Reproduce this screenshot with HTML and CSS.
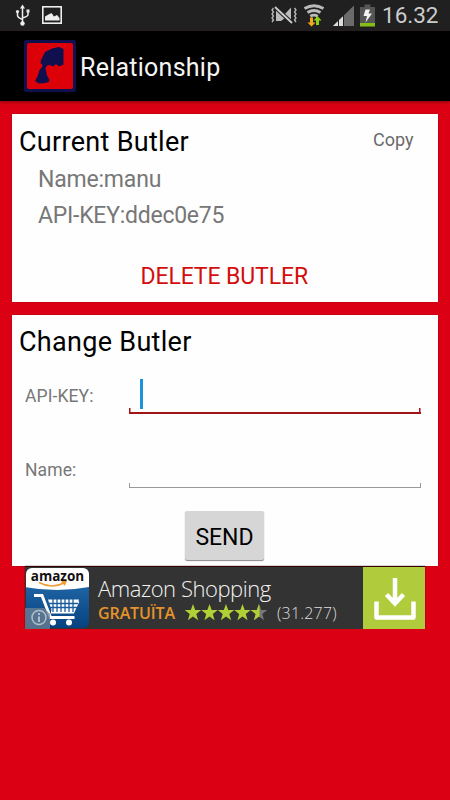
FILE: index.html
```html
<!DOCTYPE html>
<html lang="en">
<head>
    <meta charset="UTF-8">
    <meta name="viewport" content="width=device-width, initial-scale=1.0">
    <title>Relationship</title>
    <link rel="stylesheet" href="styles.css">
</head>
<body>

<div class="status-bar">
    <svg class="status-left" width="70" height="31" viewBox="0 0 70 31">
        <!-- usb -->
        <g fill="none" stroke="#eee" stroke-width="1.5">
            <path d="M22.5 7v16M17.5 12v3.5q0 2 5 4M28 12v2.500q0 2-5.500 3.500"/>
        </g>
        <path d="M22.500 4.500l2.500 4h-5z" fill="#eee"/>
        <circle cx="22.500" cy="23.500" r="2.200" fill="#eee"/>
        <circle cx="17.500" cy="11.500" r="1.600" fill="#eee"/>
        <rect x="26.500" y="9.500" width="3" height="3" fill="#eee"/>
        <!-- picture -->
        <rect x="42.800" y="6.800" width="18.400" height="16.400" fill="none" stroke="#eee" stroke-width="1.600"/>
        <path d="M45 20.500v-4l3.500-2 3-1.500 2.500 3.500 3-1.500 2.500 3v2.500z" fill="#eee"/>
    </svg>
    <svg class="status-right" width="110" height="31" viewBox="270 0 110 31">
        <!-- vibrate, muted -->
        <g fill="none" stroke="#bbb" stroke-width="1.300">
            <path d="M273.500 8l-1.500 2 1.500 2-1.500 2 1.500 2-1.500 2 1.500 2-1.500 2M294.500 8l1.500 2-1.500 2 1.500 2-1.500 2 1.500 2-1.500 2 1.500 2"/>
        </g>
        <path d="M276 11h5l4 3 6-6.500V23l-6-5-4 3h-5z" fill="#bbb"/>
        <path d="M275 7l17 16" stroke="#202020" stroke-width="4"/>
        <path d="M275 7l17 16" stroke="#ccc" stroke-width="1.800"/>
        <!-- wifi -->
        <g fill="none" stroke="#bbb" stroke-width="2.800">
            <path d="M304.500 8.500q9.500-5.500 19 0"/>
            <path d="M307.500 12.500q6.500-4 13 0"/>
            <path d="M310.300 16.300q3.700-2.300 7.400 0"/>
        </g>
        <path d="M310 17.500h3v5h2.500l-4 4-4-4h2.500z" fill="#f5a81c"/>
        <path d="M316 25v-4.500h-2.500l4-4.500 4 4.500h-2.500V25z" fill="#8ed018"/>
        <!-- signal -->
        <path d="M333 26L354 5.500V26z" fill="#6b6b6b"/>
        <path d="M333 26l10.500-10.200V26z" fill="#ddd"/>
        <path d="M338.500 18v8M343.500 14v12" stroke="#202020" stroke-width="1"/>
        <!-- battery -->
        <path d="M360 7h4.500V4.500h6V7h4.500v16h-15z" fill="#555"/>
        <rect x="360" y="23" width="15" height="3.500" fill="#86bd16"/>
        <path d="M365.500 9.500h4.500l-1.500 4h3.500l-6.500 9 1.500-6.500h-3.500z" fill="#f4f4f4"/>
    </svg>
    <span class="clock">16.32</span>
</div>

<div class="action-bar">
    <svg class="app-icon" width="52" height="52" viewBox="0 0 52 52">
        <rect width="52" height="52" rx="2" fill="#10104f"/>
        <rect x="3" y="3" width="46" height="46" rx="2" fill="#dc0008"/>
        <!-- hand ringing a bell -->
        <path d="M16.500 23.500l.5-3.500 4-8 7-3.500 7-1.500 4.500 2v15.500l-4.500 2-3-2.500-3 2.500-3-1.500-3 .5-1.500 3 1.500 7 2.500 4.500-1 2-3.500 1-6 .5-4-2.500 2.500-4.500 2-6.500 3-3.500-.5-2.500z" fill="#10104f"/>
    </svg>
    <span class="title">Relationship</span>
</div>

<main class="content">
    <section class="card current">
        <div class="card-head">
            <h2>Current Butler</h2>
            <span class="copy">Copy</span>
        </div>
        <p class="info name">Name:manu</p>
        <p class="info key">API-KEY:ddec0e75</p>
        <div class="delete">DELETE BUTLER</div>
    </section>

    <section class="card change">
        <h2>Change Butler</h2>
        <div class="field">
            <span class="label">API-KEY:</span>
            <div class="input focused"><i class="caret"></i></div>
        </div>
        <div class="field">
            <span class="label">Name:</span>
            <div class="input"></div>
        </div>
        <div class="send"><span>SEND</span></div>
    </section>

    <div class="ad">
        <svg class="ad-logo" width="64" height="62" viewBox="0 0 64 62">
            <defs>
                <linearGradient id="blue" x1="0" y1="0" x2="0" y2="1">
                    <stop offset="0.200" stop-color="#2369a8"/>
                    <stop offset="1" stop-color="#06417f"/>
                </linearGradient>
                <clipPath id="round"><rect x="1" y="1" width="63" height="60" rx="6"/></clipPath>
            </defs>
            <g clip-path="url(#round)">
                <rect width="64" height="62" fill="url(#blue)"/>
                <path d="M0 0h64v20q-32 6-64 0z" fill="#fff"/>
                <path d="M14 15.500q13 7 26 0M36.500 15l4.500-.5-2 4" fill="none" stroke="#ee9a35" stroke-width="1.500"/>
                <path d="M9 28.500h8l8.500 22h24M53 34l-5 11H26" fill="none" stroke="#fff" stroke-width="3"/>
                <path d="M23 32.500h31l-5 12H27z" fill="#fff"/>
                <path d="M22 36.500h31M24 40.500h28M28 32v13M32 32v13M36 32v13M40 32v13M44 32v13M48 32v13" stroke="#1a5c9b" stroke-width="1.300"/>
                <circle cx="28" cy="55.500" r="3" fill="#fff"/>
                <circle cx="44" cy="55.500" r="3" fill="#fff"/>
            </g>
            <text class="logo-text" x="32.500" y="13.500" text-anchor="middle">amazon</text>
            <path d="M0 41h19l6 6v15H0z" fill="#6f8295" fill-opacity=".75"/>
            <circle cx="14" cy="50.500" r="7" fill="none" stroke="#b5bec6" stroke-width="1.500"/>
            <path d="M14 46v2M14 49.500v5.500" stroke="#b5bec6" stroke-width="2"/>
        </svg>
        <div class="ad-body">
            <div class="ad-title">Amazon Shopping</div>
            <div class="ad-info">
                <span class="free">GRATUÏTA</span>
                <svg class="stars" width="82" height="18" viewBox="0 0 82 18">
                    <defs>
                        <path id="star" d="M8 0l2.200 6h6l-4.900 3.900 1.800 6.300L8 12.500l-5.100 3.700 1.800-6.300L-.2 6h6z"/>
                        <clipPath id="half"><rect x="0" y="0" width="8.500" height="18"/></clipPath>
                    </defs>
                    <g fill="#b0d136">
                        <use href="#star"/>
                        <use href="#star" x="16.500"/>
                        <use href="#star" x="33"/>
                        <use href="#star" x="49.500"/>
                    </g>
                    <g transform="translate(66 0)">
                        <use href="#star" fill="#777"/>
                        <use href="#star" fill="#b0d136" clip-path="url(#half)"/>
                    </g>
                </svg>
                <span class="count">(31.277)</span>
            </div>
        </div>
        <svg class="download" width="62" height="62" viewBox="0 0 62 62">
            <rect width="62" height="62" fill="#b0cb3b"/>
            <path d="M32 11v24M23.500 27.500l8.500 9 8.500-9" fill="none" stroke="#fff" stroke-width="4.500"/>
            <path d="M13.500 34.500v16h37v-16" fill="none" stroke="#fff" stroke-width="4.500" stroke-linejoin="round"/>
        </svg>
    </div>
</main>

</body>
</html>
```

FILE: styles.css
```css
* {
    box-sizing: border-box;
}

body {
    margin: 0;
    height: 800px;
    overflow: hidden;
    background-color: #dc0015;
    font-family: Roboto, sans-serif;
    color: #000;
}

h2, p {
    margin: 0;
    font-weight: 400;
    white-space: nowrap;
}

.status-bar {
    display: flex;
    height: 31px;
    background-color: #202020;
}

.status-right {
    margin-left: 200px;
}

.clock {
    margin-left: 2px;
    font-size: 22.5px;
    line-height: 31px;
    color: #ccc;
}

.action-bar {
    display: flex;
    align-items: center;
    height: 70px;
    padding-left: 24px;
    background-color: #000;
    color: #f5f5f5;
    box-shadow: 0 1px 3px rgba(80, 0, 0, 0.7);
}

.title {
    margin: 2px 0 0 4px;
    font-size: 25px;
    letter-spacing: 0.25px;
}

.content {
    padding: 13px 12.5px 0 12px;
}

.card {
    background-color: #fefefe;
    box-shadow: 0 0 1px #700;
}

.card h2 {
    font-size: 27px;
    letter-spacing: 0.3px;
    line-height: 32px;
}

.current {
    height: 188px;
    padding: 12px 24px 0 7px;
}

.card-head {
    display: flex;
    justify-content: space-between;
}

.copy {
    font-size: 18px;
    line-height: 27px;
    color: #6b6b6b;
}

.info {
    padding-left: 19px;
    font-size: 23px;
    line-height: 36px;
    color: #777;
}

.info.name {
    margin-top: 4px;
    letter-spacing: -0.2px;
}

.info.key {
    letter-spacing: -0.25px;
}

.delete {
    margin-top: 27px;
    padding-left: 16px;
    font-size: 23px;
    letter-spacing: -0.1px;
    line-height: 32px;
    text-align: center;
    color: #d40d0d;
}

.change {
    height: 250.5px;
    margin-top: 13px;
    padding: 11px 17px 0 7px;
}

.field {
    display: flex;
    align-items: center;
    height: 49px;
    margin-top: 7px;
    padding-left: 6px;
}

.field + .field {
    margin-top: 25px;
}

.label {
    width: 104px;
    padding-top: 13px;
    font-size: 17.5px;
    letter-spacing: 0.1px;
    color: #777;
}

.input {
    flex: 1;
    align-self: flex-end;
    display: flex;
    height: 41px;
    padding: 6px 0 0 11px;
    border-bottom: 1px solid #999;
    background: linear-gradient(#999, #999) left bottom / 1px 4px no-repeat,
                linear-gradient(#999, #999) right bottom / 1px 4px no-repeat;
}

.input.focused {
    border-bottom: 2px solid #a31515;
    background: linear-gradient(#a31515, #a31515) left bottom / 1.5px 4px no-repeat,
                linear-gradient(#a31515, #a31515) right bottom / 1.5px 4px no-repeat;
}

.caret {
    width: 2.5px;
    height: 30px;
    background-color: #1b93dc;
}

.send {
    display: flex;
    align-items: center;
    justify-content: center;
    width: 79px;
    height: 49px;
    margin: 23px 0 0 166px;
    padding-top: 3px;
    border-radius: 2px;
    background-color: #d6d6d6;
    box-shadow: 0 1px 1px #888;
    font-size: 23px;
}

.ad {
    display: flex;
    width: 400px;
    height: 62px;
    margin: 1.5px 0 0 13px;
    background-color: #333;
    font-family: "Open Sans", sans-serif;
    box-shadow: 0 -1px 1px #300;
}

.logo-text {
    font-family: "Open Sans", sans-serif;
    font-size: 13.5px;
    font-weight: 700;
    fill: #111;
}

.ad-body {
    width: 274px;
    padding-left: 9px;
    white-space: nowrap;
}

.ad-title {
    height: 34px;
    padding-top: 7px;
    font-size: 22px;
    font-weight: 300;
    letter-spacing: -0.45px;
    line-height: 28px;
    color: #f2f2f2;
}

.ad-info {
    display: flex;
    align-items: center;
    height: 23px;
    line-height: 20px;
}

.free {
    width: 87px;
    font-size: 16px;
    font-weight: 600;
    letter-spacing: -0.1px;
    color: #e6932c;
}

.count {
    margin-left: 10px;
    font-size: 16px;
    font-weight: 300;
    letter-spacing: 0.2px;
    color: #ddd;
}
```
